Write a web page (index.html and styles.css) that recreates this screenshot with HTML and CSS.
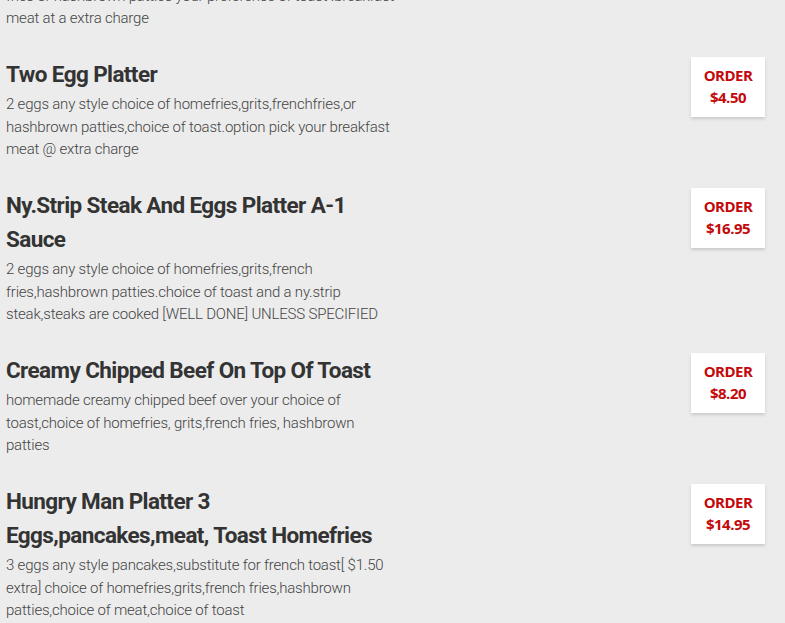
FILE: index.html
```html
<!DOCTYPE html>
<html lang="en">
<head>
    <meta charset="UTF-8">
    <meta name="viewport" content="width=device-width, initial-scale=1.0">
    <title>Breakfast Platters</title>
    <link rel="stylesheet" href="styles.css">
</head>
<body>
    <div class="menu-list">
        <!-- item partially scrolled out of view -->
        <div class="menu-item">
            <div class="item-text">
                <h3 class="item-name">One Egg Platter</h3>
                <p class="item-desc">1 egg any style with your choice of homefries,grits,or french fries or hashbrown patties your preference of toast .breakfast meat at a extra charge</p>
            </div>
            <button class="order-btn" type="button">ORDER<span class="price">$3.50</span></button>
        </div>

        <div class="menu-item">
            <div class="item-text">
                <h3 class="item-name">Two Egg Platter</h3>
                <p class="item-desc">2 eggs any style choice of homefries,grits,frenchfries,or hashbrown patties,choice of toast.option pick your breakfast meat @ extra charge</p>
            </div>
            <button class="order-btn" type="button">ORDER<span class="price">$4.50</span></button>
        </div>

        <div class="menu-item">
            <div class="item-text">
                <h3 class="item-name">Ny.Strip Steak And Eggs Platter A-1 Sauce</h3>
                <p class="item-desc">2 eggs any style choice of homefries,grits,french fries,hashbrown patties.choice of toast and a ny.strip steak,steaks are cooked [WELL DONE] UNLESS SPECIFIED</p>
            </div>
            <button class="order-btn" type="button">ORDER<span class="price">$16.95</span></button>
        </div>

        <div class="menu-item">
            <div class="item-text">
                <h3 class="item-name">Creamy Chipped Beef On Top Of Toast</h3>
                <p class="item-desc">homemade creamy chipped beef over your choice of toast,choice of homefries, grits,french fries, hashbrown patties</p>
            </div>
            <button class="order-btn" type="button">ORDER<span class="price">$8.20</span></button>
        </div>

        <div class="menu-item">
            <div class="item-text">
                <h3 class="item-name">Hungry Man Platter 3 Eggs,pancakes,meat, Toast Homefries</h3>
                <p class="item-desc">3 eggs any style pancakes,substitute for french toast[ $1.50 extra] choice of homefries,grits,french fries,hashbrown patties,choice of meat,choice of toast</p>
            </div>
            <button class="order-btn" type="button">ORDER<span class="price">$14.95</span></button>
        </div>
    </div>
</body>
</html>
```

FILE: styles.css
```css
body {
    font-family: "Roboto", "Liberation Sans", sans-serif;
    background-color: #ececec;
    margin: 0;
    overflow: hidden;
}

.menu-list {
    margin-top: -75px;
    padding: 0 20px 0 6px;
}

.menu-item {
    display: flex;
    justify-content: space-between;
    align-items: flex-start;
    margin-bottom: 26.6px;
}

.item-text {
    width: 390px;
}

.item-name {
    font-family: "Roboto", sans-serif;
    font-weight: 700;
    font-size: 22.5px;
    letter-spacing: -0.6px;
    line-height: 34px;
    color: #333;
    margin: 1px 0 2px 0;
}

.item-desc {
    font-size: 15px;
    font-weight: 300;
    letter-spacing: -0.2px;
    line-height: 22.5px;
    color: #444;
    margin: 0;
}

.order-btn {
    width: 74px;
    height: 60px;
    margin-top: 1px;
    background-color: #fff;
    border: none;
    box-shadow: 0 2px 3px rgba(0, 0, 0, 0.15);
    color: #c4090b;
    font-family: "Open Sans", sans-serif;
    font-weight: 700;
    font-size: 15px;
    letter-spacing: -0.5px;
    line-height: 22px;
    padding: 0 0 2px 0;
    cursor: pointer;
}

.price {
    display: block;
}
```
